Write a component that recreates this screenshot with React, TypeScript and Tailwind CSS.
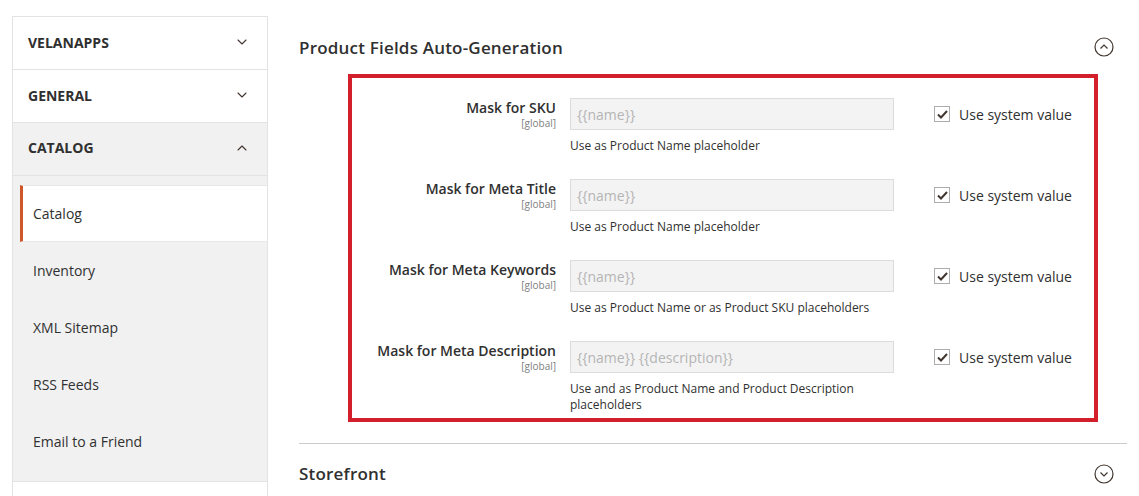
import { ChevronDown, ChevronUp } from "lucide-react";

const fields = [
  { label: "Mask for SKU", value: "{{name}}", note: "Use as Product Name placeholder" },
  { label: "Mask for Meta Title", value: "{{name}}", note: "Use as Product Name placeholder" },
  { label: "Mask for Meta Keywords", value: "{{name}}", note: "Use as Product Name or as Product SKU placeholders" },
  {
    label: "Mask for Meta Description",
    value: "{{name}} {{description}}",
    note: "Use and as Product Name and Product Description placeholders",
  },
];

const subItems = ["Inventory", "XML Sitemap", "RSS Feeds", "Email to a Friend"];

function CircleToggle({ open }: { open: boolean }) {
  return (
    <svg width="20" height="20" viewBox="0 0 20 20" fill="none" stroke="#41362f" strokeWidth="1.2">
      <circle cx="10" cy="10" r="9" />
      {open ? <path d="M6.5 11.5 L10 8 L13.5 11.5" /> : <path d="M6.5 8.5 L10 12 L13.5 8.5" />}
    </svg>
  );
}

function Sidebar() {
  return (
    <aside className="w-[256px] shrink-0 mt-4 ml-3 border border-[#e3e3e3] border-b-0 self-start">
      {["VELANAPPS", "GENERAL"].map((name) => (
        <div key={name} className="h-[53px] flex items-center justify-between pl-[15px] pr-[17px] pb-[2px] border-b border-[#e3e3e3]">
          <span className="text-[14px] font-bold text-[#303030]">{name}</span>
          <ChevronDown className="w-[16px] h-[16px] text-[#41362f]" strokeWidth={1.6} />
        </div>
      ))}
      <div className="h-[53px] flex items-center justify-between pl-[15px] pr-[17px] pb-[3px] bg-[#f1f1f1] border-b border-[#e3e3e3]">
        <span className="text-[14px] font-bold text-[#303030]">CATALOG</span>
        <ChevronUp className="w-[16px] h-[16px] text-[#41362f]" strokeWidth={1.6} />
      </div>
      <div className="bg-[#f1f1f1] pt-[9px] pb-[11px] pl-[7px] border-b border-[#e3e3e3]">
        <div className="h-[57px] flex items-center bg-white border-l-[3px] border-[#d0572a] pl-[10px] border-y border-y-[#e8e8e8]">
          <span className="text-[14px] text-[#303030]">Catalog</span>
        </div>
        {subItems.map((item) => (
          <div key={item} className="h-[57px] flex items-center pl-[13px]">
            <span className="text-[14px] text-[#303030]">{item}</span>
          </div>
        ))}
      </div>
      <div className="h-[14px] bg-white" />
    </aside>
  );
}

function FieldRow({ label, value, note }: { label: string; value: string; note: string }) {
  return (
    <div className="flex items-start">
      <div className="w-[204px] text-right pt-[1px]">
        <div className="text-[14px] font-semibold text-[#303030] leading-[18px]">{label}</div>
        <div className="text-[10px] text-[#808080] leading-[13px]">[global]</div>
      </div>
      <div className="ml-[14px] w-[324px]">
        <div className="h-[32px] border border-[#dcdcdc] bg-[#f3f3f3] flex items-center px-[6px] text-[14px] text-[#b5b5b5]">
          {value}
        </div>
        <div className="mt-[8px] text-[12px] leading-[16px] text-[#303030] w-[300px]">{note}</div>
      </div>
      <label className="ml-[40px] flex items-center gap-[9px] h-[32px]">
        <span className="w-[16px] h-[16px] border border-[#adadad] flex items-center justify-center bg-white">
          <svg width="11" height="9" viewBox="0 0 11 9" fill="none" stroke="#41362f" strokeWidth="2">
            <path d="M1 4.5 L4 7.5 L10 1" />
          </svg>
        </span>
        <span className="text-[14px] text-[#303030]">Use system value</span>
      </label>
    </div>
  );
}

export default function App() {
  return (
    <div className="w-[1139px] h-[496px] overflow-hidden bg-white flex font-['Open_Sans',sans-serif]">
      <Sidebar />
      <main className="flex-1 ml-[31px] mr-[12px]">
        <div className="h-[94px] flex items-start justify-between pt-[35px] pr-[13px]">
          <h2 className="text-[17px] font-semibold text-[#303030] tracking-[0.2px]">Product Fields Auto-Generation</h2>
          <div className="mt-[2px]">
            <CircleToggle open />
          </div>
        </div>
        <div className="-mt-[20px] ml-[49px] w-[750px] h-[348px] border-4 border-[#d31f2b] pt-[20px] pl-0 flex flex-col gap-[33px]">
          {fields.map((f) => (
            <div key={f.label} className="h-[48px]">
              <FieldRow {...f} />
            </div>
          ))}
        </div>
        <div className="mt-[21px] border-t border-[#cccccc] flex items-center justify-between h-[50px] pt-[11px] pr-[13px]">
          <h2 className="text-[17px] font-semibold text-[#303030] tracking-[0.2px]">Storefront</h2>
          <CircleToggle open={false} />
        </div>
      </main>
    </div>
  );
}
